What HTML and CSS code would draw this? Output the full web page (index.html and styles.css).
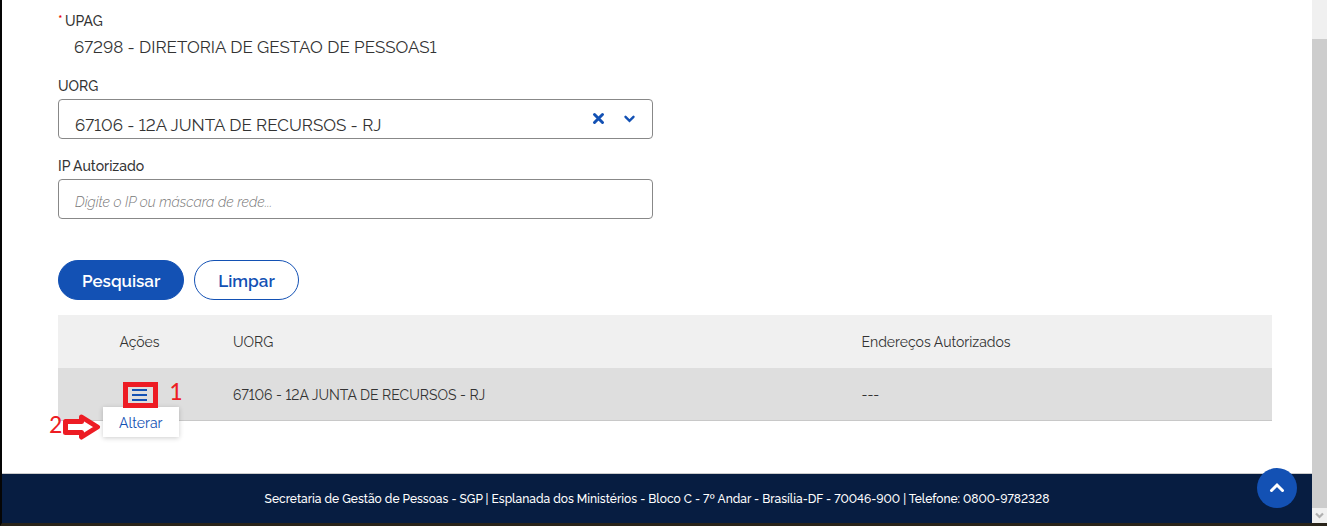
FILE: index.html
```html
<!DOCTYPE html>
<html lang="pt-BR">
<head>
  <meta charset="UTF-8">
  <title>IP Autorizado</title>
  <link rel="stylesheet" href="styles.css">
</head>
<body>
  <div class="page">
    <main class="content">
      <form class="search-form">
        <div class="field">
          <span class="label"><span class="required">*</span>UPAG</span>
          <p class="value">67298 - DIRETORIA DE GESTAO DE PESSOAS1</p>
        </div>

        <div class="field">
          <label class="label" for="uorg">UORG</label>
          <div class="control">
            <input class="input input-uorg" type="text" id="uorg" value="67106 - 12A JUNTA DE RECURSOS - RJ">
            <button class="icon-btn" type="button" aria-label="Limpar UORG">
              <svg width="13" height="13" viewBox="0 0 13 13"><path d="M2.5 2.5l8 8M10.5 2.5l-8 8" stroke="currentColor" stroke-width="3" stroke-linecap="round"/></svg>
            </button>
            <button class="icon-btn" type="button" aria-label="Abrir lista">
              <svg width="13" height="13" viewBox="0 0 13 13"><path d="M2.5 4.8l4 4 4-4" fill="none" stroke="currentColor" stroke-width="2.4" stroke-linecap="round"/></svg>
            </button>
          </div>
        </div>

        <div class="field">
          <label class="label" for="ip">IP Autorizado</label>
          <div class="control">
            <input class="input" type="text" id="ip" placeholder="Digite o IP ou máscara de rede...">
          </div>
        </div>

        <div class="buttons">
          <button class="btn btn-primary" type="button">Pesquisar</button>
          <button class="btn btn-secondary" type="reset">Limpar</button>
        </div>
      </form>

      <table class="results">
        <thead>
          <tr>
            <th class="col-actions">Ações</th>
            <th>UORG</th>
            <th class="col-address">Endereços Autorizados</th>
          </tr>
        </thead>
        <tbody>
          <tr>
            <td class="col-actions">
              <button class="menu-btn" type="button" aria-label="Ações">
                <svg width="15" height="13" viewBox="0 0 15 13"><path d="M0 1h15M0 6h15M0 11h15" stroke="currentColor" stroke-width="2"/></svg>
              </button>
              <a class="menu-item" href="#">Alterar</a>
              <span class="mark-box"></span>
              <span class="mark-number mark-one">1</span>
              <span class="mark-number mark-two">2</span>
              <svg class="mark-arrow" width="38" height="28" viewBox="0 0 38 28"><path d="M2.5 8.500h16v-4.500l16 10-16 10v-4.500h-16z" fill="#fff" stroke="#ed1c24" stroke-width="5" stroke-linejoin="round"/></svg>
            </td>
            <td>67106 - 12A JUNTA DE RECURSOS - RJ</td>
            <td class="col-address">---</td>
          </tr>
        </tbody>
      </table>
    </main>

    <footer class="footer">
      <p>Secretaria de Gestão de Pessoas - SGP | Esplanada dos Ministérios - Bloco C - 7º Andar - Brasília-DF - 70046-900 | Telefone: 0800-9782328</p>
      <button class="to-top" type="button" aria-label="Voltar ao topo">
        <svg width="16" height="16" viewBox="0 0 16 16"><path d="M2.500 10.500l5.500-5.500 5.500 5.500" fill="none" stroke="currentColor" stroke-width="3" stroke-linecap="round"/></svg>
      </button>
    </footer>
  </div>

  <div class="scrollbar">
    <div class="thumb"></div>
    <svg class="scroll-down" width="15" height="15" viewBox="0 0 15 15"><path d="M4 5.500l3.500 3.500 3.500-3.500" fill="none" stroke="#b0b0b0" stroke-width="2.200"/></svg>
  </div>
</body>
</html>
```

FILE: styles.css
```css
* {
  box-sizing: border-box;
}
body {
  display: flex;
  min-height: 100vh;
  margin: 0;
  border-left: 2px solid #050505;
  border-bottom: 3px solid #29241a;
  background: #fff;
  color: #333;
  font-family: Raleway, Lato, sans-serif;
  font-size: 14px;
  font-variant-numeric: lining-nums;
  line-height: 20px;
}
button,
input {
  font-family: inherit;
  font-variant-numeric: inherit;
}
.page {
  display: flex;
  flex: 1;
  flex-direction: column;
}
.content {
  flex: 1;
  padding: 11px 40px 24px 56px;
}
.field {
  width: 49%;
  margin-bottom: 17px;
}
.label {
  display: block;
  margin-bottom: 3px;
  font-weight: 500;
}
.required {
  display: inline-block;
  width: 7px;
  color: #e60000;
}
.value {
  margin: 0;
  padding: 3px 16px 2px;
  font-size: 17px;
}
.control {
  display: flex;
  align-items: center;
  height: 40px;
  padding-right: 15px;
  border: 1px solid #888;
  border-radius: 4px;
}
.input {
  flex: 1;
  min-width: 0;
  height: 38px;
  padding: 6px 16px 0;
  border: 0;
  background: none;
  color: #333;
  font-size: 14px;
}
.input-uorg {
  padding-top: 12px;
  font-size: 17px;
}
.input::placeholder {
  color: #777;
  font-style: italic;
  font-weight: 300;
}
.icon-btn {
  display: flex;
  justify-content: center;
  width: 31px;
  padding: 0 9px 2px;
  border: 0;
  background: none;
  color: #1351b4;
}
.icon-btn:last-child {
  width: 15px;
  margin-left: 8px;
  padding: 0 0 2px;
}
.buttons {
  display: flex;
  gap: 10px;
  padding: 24px 0 15px;
}
.btn {
  height: 40px;
  padding: 2px 23px 0;
  border: 1px solid #1351b4;
  border-radius: 20px;
  font-size: 17px;
  font-weight: 600;
}
.btn-primary {
  background: #1351b4;
  color: #fff;
}
.btn-secondary {
  background: #fff;
  color: #1351b4;
}
.results {
  width: 100%;
  border-collapse: separate;
  border-spacing: 0;
  table-layout: fixed;
}
.results th,
.results td {
  height: 53px;
  padding: 0 12px;
  text-align: left;
  font-weight: 400;
}
.results th {
  background: #f0f0f0;
}
.results td {
  padding-top: 2px;
  border-bottom: 1px solid #c8c8c8;
  background: #dedede;
}
.results .col-actions {
  position: relative;
  width: 163px;
  text-align: center;
}
.results .col-address {
  width: 34.8%;
}
.menu-btn {
  display: inline-flex;
  padding: 1px 2px 3px;
  border: 0;
  background: none;
  color: #1351b4;
  vertical-align: middle;
}
.menu-item {
  position: absolute;
  top: 39px;
  left: 45px;
  padding: 6px 16px 4px;
  background: #fff;
  box-shadow: 0 1px 5px rgba(0, 0, 0, 0.2);
  color: #1351b4;
  text-decoration: none;
}

/* numbered steps drawn over the row */
.mark-box {
  position: absolute;
  top: 14px;
  left: 65px;
  width: 35px;
  height: 26px;
  border: 5px solid #ed1c24;
}
.mark-number {
  position: absolute;
  color: #ed1c24;
  font-family: Carlito, Lato, sans-serif;
  font-size: 26px;
  line-height: 28px;
}
.mark-one {
  top: 9px;
  left: 111px;
}
.mark-two {
  top: 42px;
  left: -9px;
}
.mark-arrow {
  position: absolute;
  top: 45px;
  left: 5px;
}

.footer {
  position: relative;
  padding: 15px 16px 14px;
  border-top: 1px solid #ccc;
  background: #071d41;
  color: #fff;
  font-size: 12px;
  font-weight: 500;
  text-align: center;
}
.footer p {
  margin: 0;
}
.to-top {
  position: absolute;
  top: -6px;
  right: 15px;
  display: flex;
  align-items: center;
  justify-content: center;
  width: 40px;
  height: 40px;
  padding: 0;
  border: 0;
  border-radius: 50%;
  background: #1351b4;
  color: #fff;
}
.scrollbar {
  display: flex;
  flex-direction: column;
  width: 15px;
  padding-top: 39px;
  background: #f0f0f0;
}
.thumb {
  flex: 1;
  background: #cdcdcd;
}
```
